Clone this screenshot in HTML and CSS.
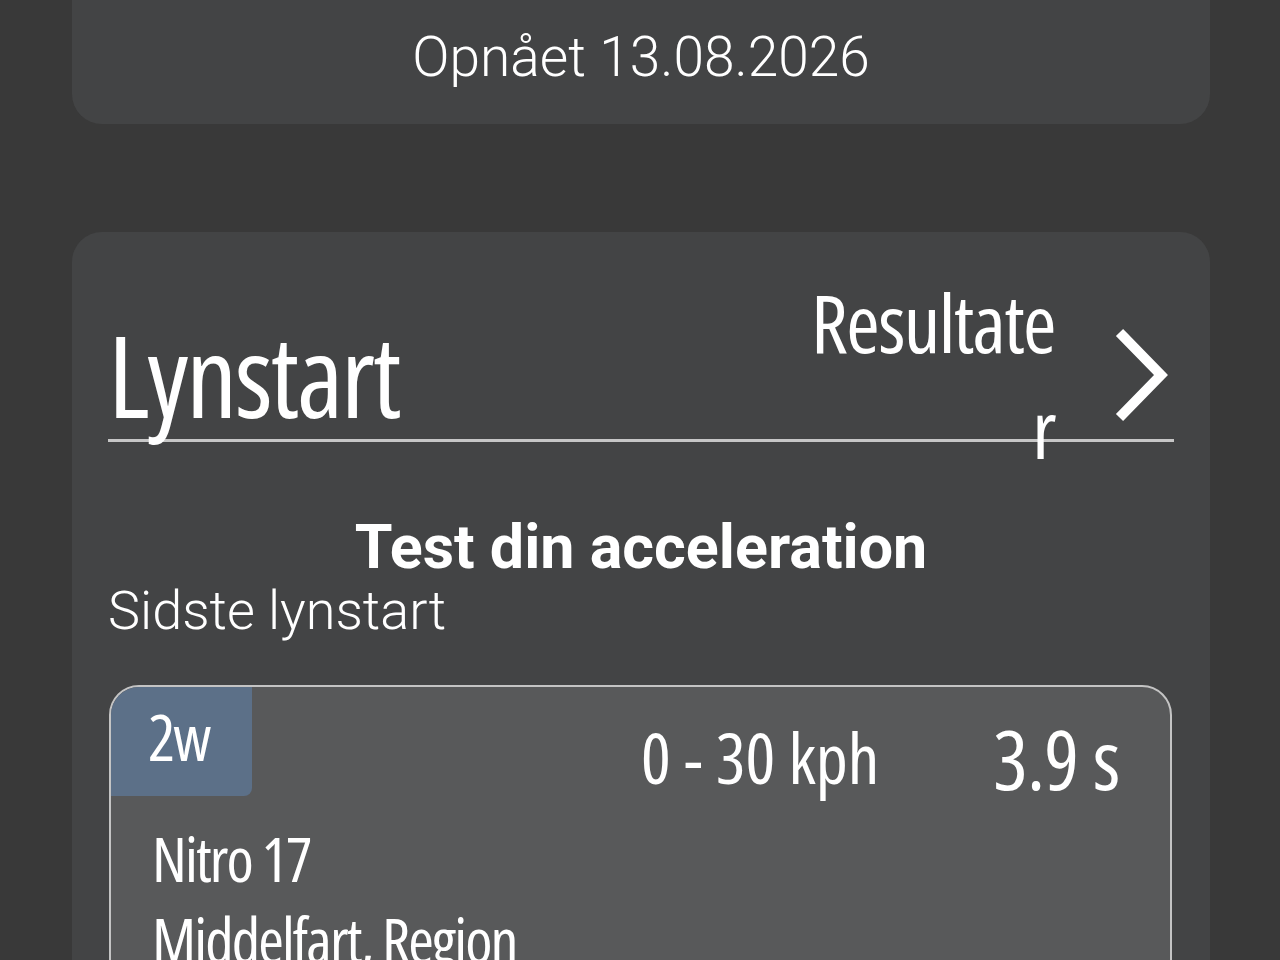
FILE: index.html
```html
<!DOCTYPE html>
<html lang="da">
<head>
<meta charset="utf-8">
<title>Lynstart</title>
<link rel="stylesheet" href="styles.css">
</head>
<body>
<div class="page">
  <section class="card card-top">
    <p class="achieved">Opnået 13.08.2026</p>
  </section>

  <section class="card card-main">
    <header class="head">
      <h1 class="title cond">Lynstart</h1>
      <a class="results">
        <span class="results-text cond"><span class="line">Resultate</span><span class="line">r</span></span>
        <svg class="chev" width="60" height="96" viewBox="0 0 60 96" aria-hidden="true">
          <path d="M9 9 L47 48 L9 87" fill="none" stroke="#ffffff" stroke-width="10" stroke-linecap="square" stroke-linejoin="miter"/>
        </svg>
      </a>
    </header>

    <h2 class="subtitle">Test din acceleration</h2>
    <p class="last">Sidste lynstart</p>

    <div class="run">
      <div class="run-top">
        <div class="badge cond">2w</div>
        <div class="speed cond">0 - 30 kph</div>
        <div class="time cond">3.9 s</div>
      </div>
      <div class="run-info cond">
        <div class="vehicle">Nitro 17</div>
        <div class="place">Middelfart, Region</div>
      </div>
    </div>
  </section>
</div>
</body>
</html>
```

FILE: styles.css
```css
html, body {
  margin: 0;
  padding: 0;
}
body {
  background: #393939;
  width: 1280px;
  height: 960px;
  overflow: hidden;
  color: #ffffff;
  font-family: Roboto, "Liberation Sans", sans-serif;
}
.page {
  padding: 0 70px 0 72px;
}
.card {
  background: #434445;
  border-radius: 30px;
}
.card-top {
  height: 124px;
  border-radius: 0 0 30px 30px;
  box-sizing: border-box;
  padding-top: 22px;
}
.achieved {
  margin: 0;
  text-align: center;
  font-weight: 300;
  font-size: 55px;
  line-height: 70px;
}
.cond {
  font-family: "Open Sans", sans-serif;
  font-stretch: 75%;
  font-weight: 500;
  letter-spacing: -0.02em;
}
.card-main {
  margin-top: 108px;
  padding: 37px 36px 0 36px;
  height: 800px;
  box-sizing: border-box;
}
.head {
  display: flex;
  justify-content: space-between;
  align-items: flex-start;
  height: 170px;
  border-bottom: 3px solid #c6c6c6;
}
.title {
  align-self: flex-end;
  margin: 0 0 15px 0;
  font-weight: 500;
  font-size: 113px;
  line-height: 100px;
}
.results {
  display: flex;
  align-items: center;
}
.results-text {
  display: flex;
  flex-direction: column;
  align-items: flex-end;
  font-size: 81px;
  line-height: 106px;
}
.chev {
  display: block;
  margin-left: 59px;
}
.subtitle {
  margin: 72px 0 0 0;
  text-align: center;
  font-weight: 700;
  font-size: 61px;
  line-height: 66px;
}
.last {
  margin: 0;
  font-weight: 300;
  font-size: 54px;
  line-height: 62px;
}
.run {
  margin: 43px 2px 0 1px;
  border: 2px solid #c4c4c4;
  border-radius: 30px;
  background: #58595a;
  height: 400px;
}
.run-top {
  display: flex;
  align-items: flex-start;
  white-space: nowrap;
}
.badge {
  width: 141px;
  height: 109px;
  box-sizing: border-box;
  background: #5c7088;
  border-radius: 28px 0 8px 0;
  padding-left: 37px;
  font-size: 64px;
  line-height: 100px;
  letter-spacing: -0.03em;
}
.speed {
  margin-left: 389px;
  width: 352px;
  padding-top: 30px;
  font-size: 70px;
  line-height: 80px;
  letter-spacing: 0;
}
.time {
  padding-top: 26px;
  font-size: 82px;
  line-height: 90px;
  letter-spacing: -0.01em;
}
.run-info {
  padding: 15px 0 0 41px;
  font-size: 62px;
  line-height: 81px;
  letter-spacing: -0.03em;
  white-space: nowrap;
}
```
